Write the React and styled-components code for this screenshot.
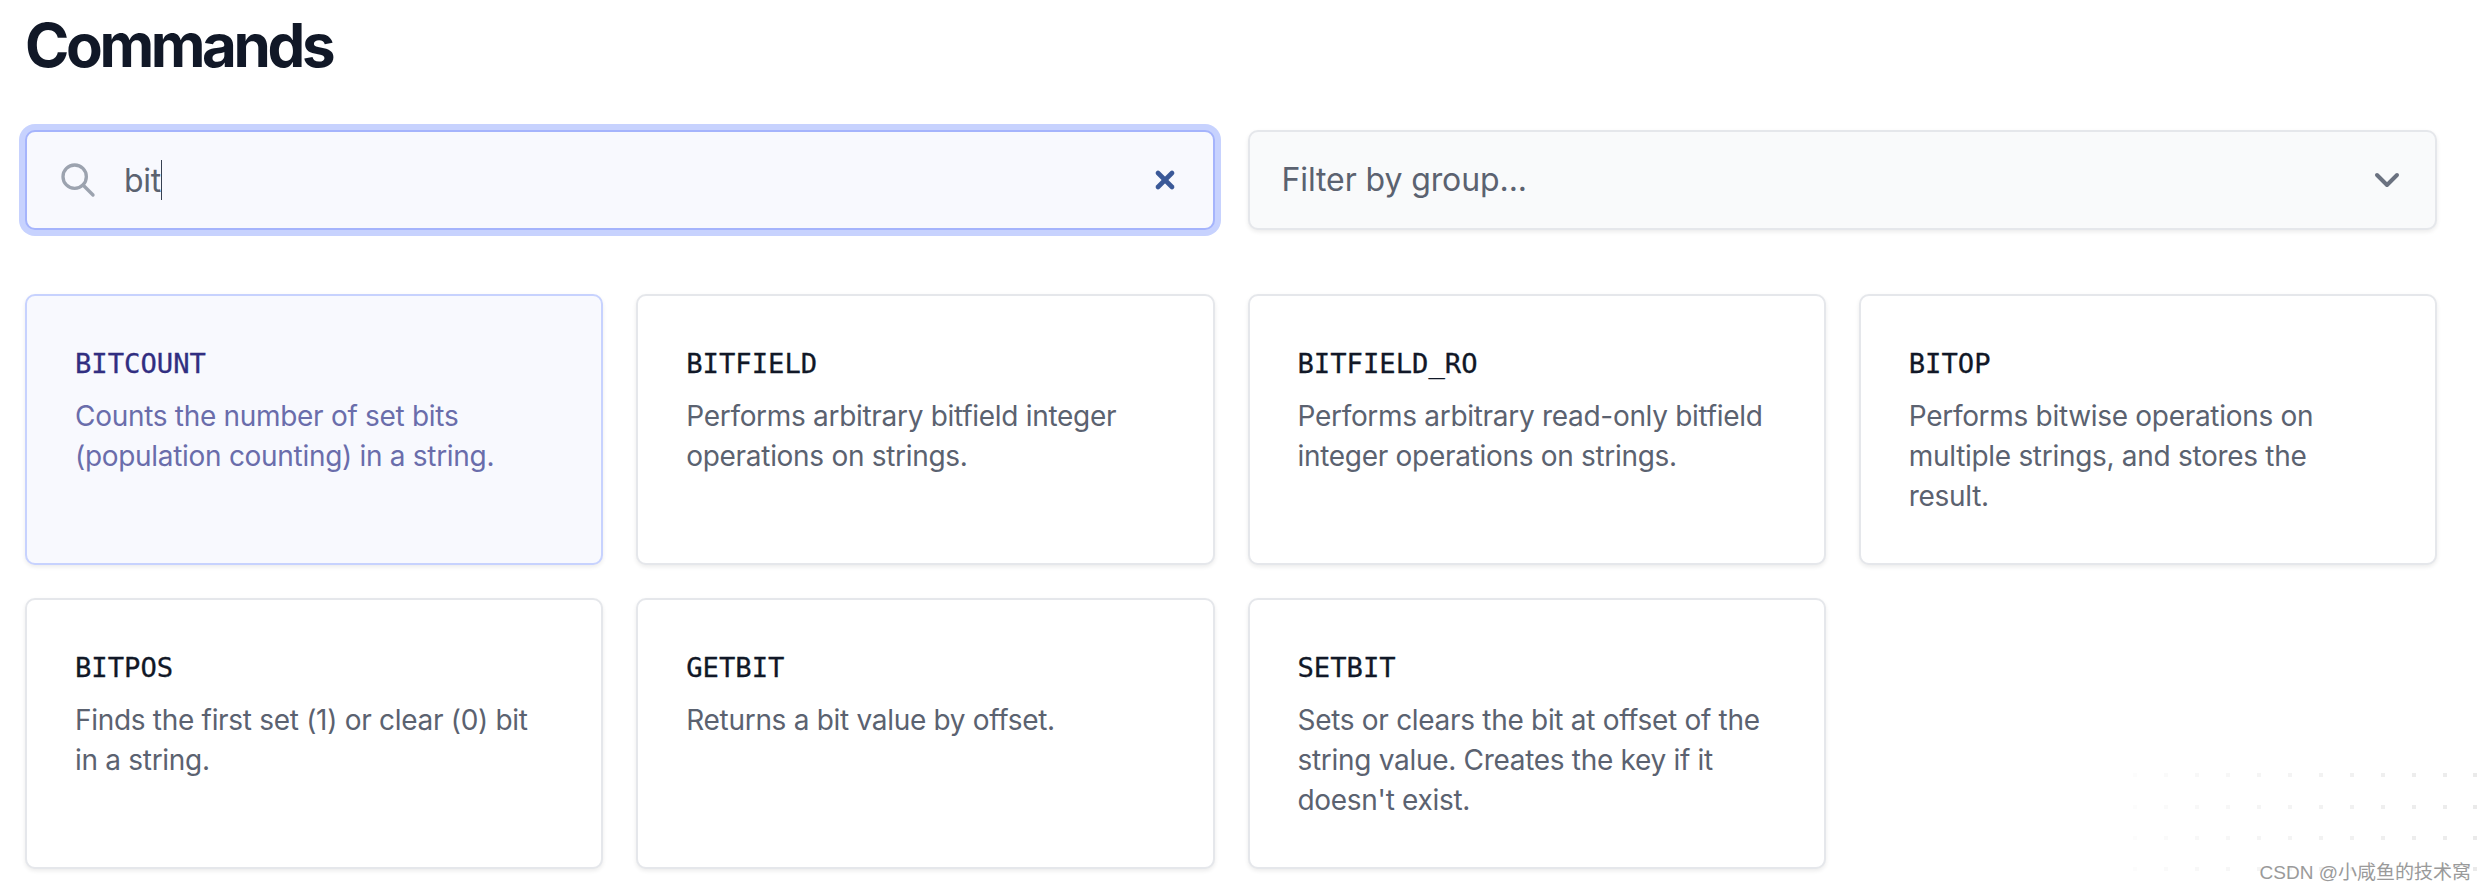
import React from 'react';
import styled, { createGlobalStyle } from 'styled-components';
import { ChevronDown, X } from 'lucide-react';

const GlobalStyle = createGlobalStyle`
  html, body {
    margin: 0;
    padding: 0;
    background: #fff;
  }
  body {
    font-family: Inter, "Noto Sans", sans-serif;
  }
`;

const Page = styled.div`
  position: relative;
  width: 2486px;
  height: 892px;
  padding: 0 49px 0 25px;
  box-sizing: border-box;
  overflow: hidden;
  background: #fff;
`;

const Title = styled.h1`
  margin: 0;
  padding-top: 9px;
  height: 130px;
  box-sizing: border-box;
  font-size: 60px;
  line-height: 72px;
  font-weight: 700;
  letter-spacing: -3.4px;
  color: #111827;
`;

const Filters = styled.div`
  display: grid;
  grid-template-columns: 1fr 1fr;
  gap: 33px;
  margin-bottom: 64px;
`;

const Field = styled.div`
  display: flex;
  align-items: center;
  height: 100px;
  box-sizing: border-box;
  border-radius: 10px;
  border: 2px solid ${(p) => (p.$focused ? '#a5b4fc' : '#e5e7eb')};
  background: ${(p) => (p.$focused ? '#f8f9fe' : '#f9fafb')};
  box-shadow: ${(p) =>
    p.$focused ? '0 0 0 6px #c7d2fe' : '0 2px 4px rgba(0, 0, 0, 0.08)'};
`;

const SearchField = styled(Field)`
  padding: 0 34px 0 31px;
`;

const GroupField = styled(Field)`
  padding: 0 28px 0 32px;
  justify-content: space-between;
`;

const SearchIcon = styled.svg`
  flex: none;
  color: #9ca3af;
`;

const ClearIcon = styled(X)`
  flex: none;
  color: #3b5998;
`;

const ChevronIcon = styled(ChevronDown)`
  flex: none;
  color: #6b7280;
`;

const Query = styled.span`
  flex: 1;
  margin-left: 26px;
  font-size: 32px;
  line-height: 40px;
  letter-spacing: -0.3px;
  color: #5b6270;
`;

const Caret = styled.span`
  display: inline-block;
  width: 1px;
  height: 40px;
  vertical-align: -8px;
  background: #374151;
`;

const Placeholder = styled.span`
  font-size: 32px;
  line-height: 40px;
  letter-spacing: -0.1px;
  color: #5b6270;
`;

const Cards = styled.div`
  display: grid;
  grid-template-columns: repeat(4, 1fr);
  grid-auto-rows: 271px;
  gap: 33px;
`;

const Card = styled.div`
  box-sizing: border-box;
  padding: 50px 48px 0 48px;
  border-radius: 10px;
  border: 2px solid ${(p) => (p.$active ? '#c7d2fe' : '#e5e7eb')};
  background: ${(p) => (p.$active ? '#f8f9fe' : '#fff')};
  box-shadow: 0 2px 4px rgba(0, 0, 0, 0.08);
`;

const Name = styled.div`
  font-family: "DejaVu Sans Mono", "Liberation Mono", monospace;
  font-size: 27.2px;
  line-height: 36px;
  -webkit-text-stroke: 0.3px currentColor;
  color: ${(p) => (p.$active ? '#312e81' : '#111827')};
`;

const Summary = styled.p`
  margin: 14px 0 0;
  font-size: 28px;
  line-height: 40px;
  letter-spacing: -0.3px;
  color: ${(p) => (p.$active ? '#6a6dab' : '#5b6270')};
`;

const Dots = styled.svg`
  position: absolute;
  left: 2100px;
  top: 765px;
`;

const Watermark = styled.div`
  position: absolute;
  right: 15px;
  bottom: 7px;
  font-family: "Liberation Sans", "Noto Sans CJK SC", sans-serif;
  font-size: 19px;
  line-height: 24px;
  color: #9a9a9a;
`;

const commands = [
  { name: 'BITCOUNT', text: 'Counts the number of set bits (population counting) in a string.', active: true },
  { name: 'BITFIELD', text: 'Performs arbitrary bitfield integer operations on strings.' },
  { name: 'BITFIELD_RO', text: 'Performs arbitrary read-only bitfield integer operations on strings.' },
  { name: 'BITOP', text: 'Performs bitwise operations on multiple strings, and stores the result.' },
  { name: 'BITPOS', text: 'Finds the first set (1) or clear (0) bit in a string.' },
  { name: 'GETBIT', text: 'Returns a bit value by offset.' },
  { name: 'SETBIT', text: "Sets or clears the bit at offset of the string value. Creates the key if it doesn't exist." },
];

const dotRows = [8, 40, 71, 102];
const dotCols = [33, 64, 95, 126, 157, 188, 219, 250, 281, 312, 343, 373];

export default function App() {
  return (
    <Page>
      <GlobalStyle />
      <Title>Commands</Title>
      <Filters>
        <SearchField $focused>
          <SearchIcon width="40" height="40" viewBox="0 0 24 24" fill="none" stroke="currentColor" strokeWidth="2" strokeLinecap="round">
            <circle cx="10" cy="10" r="7" />
            <path d="M21 21l-6-6" />
          </SearchIcon>
          <Query>bit<Caret /></Query>
          <ClearIcon size={28} strokeWidth={4} />
        </SearchField>
        <GroupField>
          <Placeholder>Filter by group...</Placeholder>
          <ChevronIcon size={40} strokeWidth={2.4} />
        </GroupField>
      </Filters>
      <Cards>
        {commands.map((c) => (
          <Card key={c.name} $active={c.active}>
            <Name $active={c.active}>{c.name}</Name>
            <Summary $active={c.active}>{c.text}</Summary>
          </Card>
        ))}
      </Cards>
      <Dots width="386" height="127">
        {dotRows.map((y, r) =>
          dotCols.map((x, i) => (
            <rect
              key={`${r}-${i}`}
              x={x}
              y={y}
              width="4"
              height="4"
              fill="#e8e8e8"
              fillOpacity={0.15 + (i / 11) * 0.75}
            />
          ))
        )}
      </Dots>
      <Watermark>CSDN @小咸鱼的技术窝</Watermark>
    </Page>
  );
}
